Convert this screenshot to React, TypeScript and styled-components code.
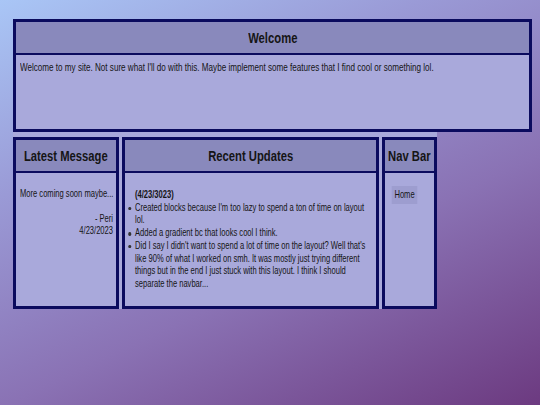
import React from "react";
import styled, { createGlobalStyle } from "styled-components";

const SX = 0.75;

const Global = createGlobalStyle`
  html, body { margin: 0; padding: 0; }
  body {
    min-height: 405px;
    background: linear-gradient(155deg, #a9c6f6 0%, #9a9ad6 30%, #8a72b4 62%, #6c3a80 100%);
    font-family: "Liberation Sans", Arial, sans-serif;
    color: #151515;
  }
  #root { padding-top: 19px; }
`;

const Page = styled.div`
  padding-left: 13px;
  width: 519px;
`;

const Box = styled.section<{ $w?: number; $h: number }>`
  box-sizing: border-box;
  width: ${(p) => (p.$w ? `${p.$w}px` : "100%")};
  height: ${(p) => p.$h}px;
  border: 3px solid #0b0b5e;
  background: #a9a9db;
  display: flex;
  flex-direction: column;
  overflow: hidden;
`;

const Header = styled.header`
  flex: 0 0 auto;
  height: 31px;
  background: #8989bc;
  border-bottom: 2px solid #0b0b5e;
  display: flex;
  align-items: center;
  justify-content: center;
  white-space: nowrap;
`;

const Title = styled.h2`
  margin: 0;
  display: inline-block;
  font-weight: bold;
  font-size: 15px;
  transform: scaleX(${SX});
  transform-origin: center;
`;

const Body = styled.div<{ $pad: string }>`
  flex: 1;
  padding: ${(p) => p.$pad};
  min-width: 0;
`;

/* Narrow text block: laid out wider, then condensed to mimic a narrow face */
const Narrow = styled.div<{ $size: number }>`
  width: ${100 / SX}%;
  transform: scaleX(${SX});
  transform-origin: left top;
  font-size: ${(p) => p.$size}px;
  line-height: 12.7px;
`;

const OneLine = styled.div`
  white-space: nowrap;
`;

const Right = styled.div`
  text-align: right;
  margin-top: 12px;
`;

const Bold = styled.div`
  font-weight: bold;
`;

const List = styled.ul`
  margin: 0;
  padding-left: 0;
`;

const Item = styled.li`
  list-style: none;
  position: relative;
  &::before {
    content: "";
    position: absolute;
    left: -9px;
    top: 5px;
    width: 3.5px;
    height: 3.5px;
    border-radius: 50%;
    background: #333;
  }
`;

const NavButton = styled.span`
  display: inline-block;
  background: #9d9dcf;
  padding: 3px 3.3px 2px;
  margin-left: 9.3px;
`;

const Row = styled.div`
  display: inline-flex;
  gap: 3px;
  padding-top: 5px;
  background: #a9a9db;
`;

export default function App() {
  return (
    <>
      <Global />
      <Page>
        <Box $h={113}>
          <Header>
            <Title>Welcome</Title>
          </Header>
          <Body $pad="6px 4px">
            <Narrow $size={10.8}>
              Welcome to my site. Not sure what I'll do with this. Maybe implement some features that I find cool or
              something lol.
            </Narrow>
          </Body>
        </Box>
        <Row>
          <Box $w={106} $h={172}>
            <Header>
              <Title>Latest Message</Title>
            </Header>
            <Body $pad="15px 3px 0 4px">
              <Narrow $size={10.1}>
                <OneLine>More coming soon maybe...</OneLine>
                <Right>
                  - Peri
                  <br />
                  4/23/2023
                </Right>
              </Narrow>
            </Body>
          </Box>
          <Box $w={257} $h={172}>
            <Header>
              <Title>Recent Updates</Title>
            </Header>
            <Body $pad="16px 10px 0 10px">
              <Narrow $size={10.1}>
                <Bold>(4/23/3023)</Bold>
                <List>
                  <Item>Created blocks because I'm too lazy to spend a ton of time on layout lol.</Item>
                  <Item>Added a gradient bc that looks cool I think.</Item>
                  <Item>
                    Did I say I didn't want to spend a lot of time on the layout? Well that's like 90% of what I worked
                    on smh. It was mostly just trying different things but in the end I just stuck with this layout. I
                    think I should separate the navbar...
                  </Item>
                </List>
              </Narrow>
            </Body>
          </Box>
          <Box $w={55} $h={172}>
            <Header>
              <Title>Nav Bar</Title>
            </Header>
            <Body $pad="13px 0 0 0">
              <Narrow $size={10.1}>
                <NavButton>Home</NavButton>
              </Narrow>
            </Body>
          </Box>
        </Row>
      </Page>
    </>
  );
}
